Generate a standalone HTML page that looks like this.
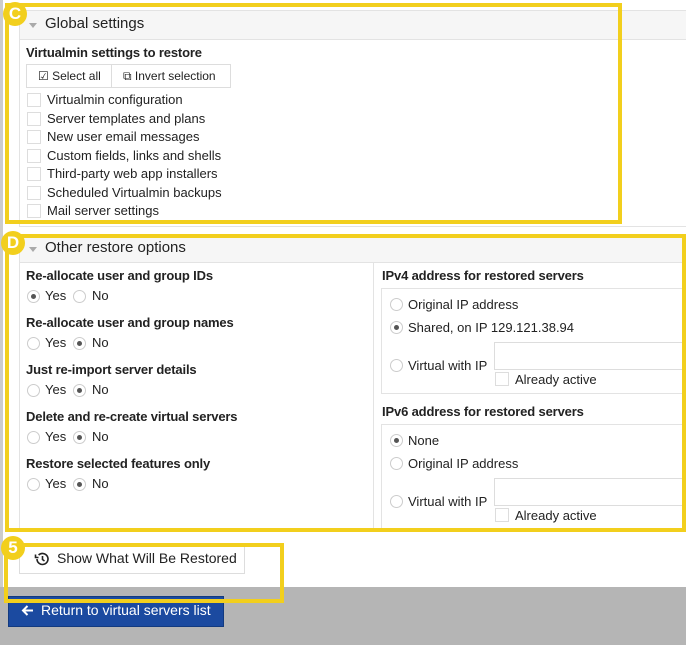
<!DOCTYPE html>
<html><head><style>
*{box-sizing:border-box;margin:0;padding:0}
body{width:686px;height:645px;overflow:hidden;background:#fff;font-family:"Liberation Sans",sans-serif;font-size:13px;color:#222;position:relative}
.a{position:absolute}
.yb{position:absolute;border:4px solid #f2cf1d}
.circ{position:absolute;width:24px;height:24px;border-radius:50%;background:#f2cf1d;color:#fff;font-weight:bold;font-size:17px;text-align:center;line-height:24px}
.hdr{position:absolute;background:#f6f6f6;border:1px solid #e3e3e3;font-size:15px;color:#222}
.tri{position:absolute;width:0;height:0;border-left:4px solid transparent;border-right:4px solid transparent;border-top:5px solid #aaa}
.b{font-weight:bold;font-size:13px;letter-spacing:-0.15px}
.cb{position:absolute;width:14px;height:14px;border:1px solid #ddd;background:#fff}
.rd{position:absolute;width:13px;height:13px;border:1px solid #ccc;border-radius:50%;background:#fff}
.rd.on::after{content:"";position:absolute;left:3px;top:3px;width:5px;height:5px;border-radius:50%;background:#555}
</style></head><body>
<div class="a" style="left:0;top:0;width:3px;height:587px;background:#ccc"></div>
<div class="a" style="left:19px;top:10px;width:667px;height:217px;border:1px solid #e3e3e3;border-right:none"></div>
<div class="hdr" style="left:19px;top:10px;width:667px;height:30px;border-right:none"></div>
<div class="tri" style="left:29px;top:23px"></div>
<div class="a" style="left:45px;top:15px;font-size:15px">Global settings</div>
<div class="a b" style="left:26px;top:45px">Virtualmin settings to restore</div>
<div class="a" style="left:26px;top:64px;width:205px;height:24px;border:1px solid #ddd;background:#fff"></div>
<div class="a" style="left:111px;top:64px;width:1px;height:24px;background:#ddd"></div>
<div class="a" style="left:38px;top:69px;font-size:12px">&#9745; Select all</div>
<div class="a" style="left:123px;top:69px;font-size:12px">&#10697; Invert selection</div>
<div id="cbs"></div>
<div class="a" style="left:19px;top:236px;width:667px;height:296px;border:1px solid #e3e3e3;border-right:none"></div>
<div class="hdr" style="left:19px;top:236px;width:667px;height:27px;border-right:none"></div>
<div class="tri" style="left:29px;top:247px"></div>
<div class="a" style="left:45px;top:239px;font-size:15px">Other restore options</div>
<div class="a" style="left:373px;top:263px;width:1px;height:269px;background:#e3e3e3"></div>
<div id="lft"></div>
<div class="a b" style="left:382px;top:268px">IPv4 address for restored servers</div>
<div class="a" style="left:381px;top:288px;width:305px;height:106px;border:1px solid #e3e3e3;border-right:none"></div>
<div class="rd" style="left:390px;top:298px"></div><div class="a" style="left:408px;top:297px">Original IP address</div>
<div class="rd on" style="left:390px;top:321px"></div><div class="a" style="left:408px;top:320px">Shared, on IP 129.121.38.94</div>
<div class="rd" style="left:390px;top:359px"></div><div class="a" style="left:408px;top:358px">Virtual with IP</div>
<div class="a" style="left:494px;top:342px;width:192px;height:28px;border:1px solid #ddd;border-right:none"></div>
<div class="cb" style="left:495px;top:372px"></div><div class="a" style="left:515px;top:372px">Already active</div>
<div class="a b" style="left:382px;top:404px">IPv6 address for restored servers</div>
<div class="a" style="left:381px;top:424px;width:305px;height:106px;border:1px solid #e3e3e3;border-right:none"></div>
<div class="rd on" style="left:390px;top:434px"></div><div class="a" style="left:408px;top:433px">None</div>
<div class="rd" style="left:390px;top:457px"></div><div class="a" style="left:408px;top:456px">Original IP address</div>
<div class="rd" style="left:390px;top:495px"></div><div class="a" style="left:408px;top:494px">Virtual with IP</div>
<div class="a" style="left:494px;top:478px;width:192px;height:28px;border:1px solid #ddd;border-right:none"></div>
<div class="cb" style="left:495px;top:508px"></div><div class="a" style="left:515px;top:508px">Already active</div>
<div class="a" style="left:19px;top:545px;width:226px;height:29px;border:1px solid #ddd;background:#fff"></div>
<svg class="a" style="left:34px;top:551px" width="16" height="16" viewBox="0 0 16 16" fill="none" stroke="#222" stroke-width="1.6"><path d="M3 8a5.5 5.5 0 1 0 1.6-3.9"/><path d="M1.5 3.5v3h3"/><path d="M8.5 5v3.5l2 1.5"/></svg>
<div class="a" style="left:57px;top:550px;font-size:14px">Show What Will Be Restored</div>
<div class="a" style="left:0;top:587px;width:686px;height:58px;background:#b5b5b5"></div>
<div class="a" style="left:8px;top:596px;width:216px;height:31px;background:#1b4aa0;border:1px solid #123a80"></div>
<svg class="a" style="left:21px;top:604px" width="13" height="13" viewBox="0 0 13 13" fill="none" stroke="#fff" stroke-width="2"><path d="M12 6.5H2M6.5 2L2 6.5 6.5 11"/></svg>
<div class="a" style="left:41px;top:602px;color:#fff;font-size:14px">Return to virtual servers list</div>
<div class="yb" style="left:5px;top:3px;width:617px;height:221px"></div>
<div class="circ" style="left:3px;top:2px">C</div>
<div class="yb" style="left:5px;top:234px;width:681px;height:298px"></div>
<div class="circ" style="left:1px;top:231px">D</div>
<div class="yb" style="left:4px;top:543px;width:280px;height:60px"></div>
<div class="circ" style="left:1px;top:536px">5</div>
<script>
var t=["Virtualmin configuration","Server templates and plans","New user email messages","Custom fields, links and shells","Third-party web app installers","Scheduled Virtualmin backups","Mail server settings"],h="";
t.forEach(function(s,i){var y=92+i*18.5;h+='<div class="cb" style="left:27px;top:'+(y+1)+'px"></div><div class="a" style="left:47px;top:'+y+'px">'+s+'</div>';});
document.getElementById("cbs").innerHTML=h;
var q=[["Re-allocate user and group IDs",1],["Re-allocate user and group names",0],["Just re-import server details",0],["Delete and re-create virtual servers",0],["Restore selected features only",0]];h="";
q.forEach(function(o,i){var y=268+i*47;h+='<div class="a b" style="left:26px;top:'+y+'px">'+o[0]+'</div>';
h+='<div class="rd'+(o[1]?' on':'')+'" style="left:27px;top:'+(y+22)+'px"></div><div class="a" style="left:45px;top:'+(y+20)+'px">Yes</div>';
h+='<div class="rd'+(o[1]?'':' on')+'" style="left:73px;top:'+(y+22)+'px"></div><div class="a" style="left:92px;top:'+(y+20)+'px">No</div>';});
document.getElementById("lft").innerHTML=h;
</script>
</body></html>
